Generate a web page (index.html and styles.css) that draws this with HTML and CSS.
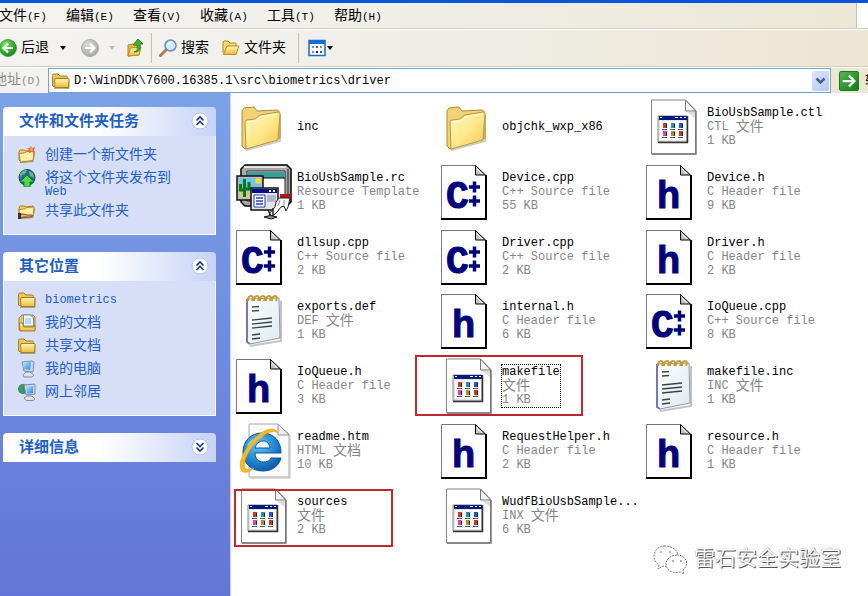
FILE: index.html
```html
<!DOCTYPE html>
<html lang="zh-CN">
<head>
<meta charset="utf-8">
<title>driver</title>
<link rel="stylesheet" href="styles.css">
</head>
<body>
<svg class="defs" aria-hidden="true">
  <defs>
    <linearGradient id="g-folder" x1="0" y1="0" x2="1" y2="1"><stop offset="0" stop-color="#fff9c4"/><stop offset=".5" stop-color="#ffe88c"/><stop offset="1" stop-color="#f5c64e"/></linearGradient>
    <linearGradient id="g-small" x1="0" y1="0" x2="0" y2="1"><stop offset="0" stop-color="#fff6b8"/><stop offset="1" stop-color="#f0bc35"/></linearGradient>
    <radialGradient id="g-green" cx=".35" cy=".3" r=".8"><stop offset="0" stop-color="#8be06c"/><stop offset=".6" stop-color="#2fa832"/><stop offset="1" stop-color="#168018"/></radialGradient>
    <radialGradient id="g-grey" cx=".35" cy=".3" r=".8"><stop offset="0" stop-color="#dcdcdc"/><stop offset="1" stop-color="#a3a3a3"/></radialGradient>
    <radialGradient id="g-ie" cx=".4" cy=".3" r=".8"><stop offset="0" stop-color="#62c8f5"/><stop offset=".6" stop-color="#1b82cf"/><stop offset="1" stop-color="#0b4f9c"/></radialGradient>
    <linearGradient id="g-screen" x1="0" y1="0" x2="1" y2="1"><stop offset="0" stop-color="#b9ecff"/><stop offset="1" stop-color="#1f86e0"/></linearGradient>
    <linearGradient id="g-pad" x1="0" y1="0" x2="1" y2="1"><stop offset="0" stop-color="#ffffff"/><stop offset="1" stop-color="#dcebf0"/></linearGradient>

    <symbol id="i-folder" viewBox="0 0 56 56">
      <path d="M10 51l34-9V16" fill="none" stroke="#999" stroke-width="2" opacity=".5"/>
      <path d="M6 12l2-3 10-1 3 4 20-1q3 1 3 4v24L9 50 6 47z" fill="#f2d272" stroke="#a78a3d"/>
      <path d="M9 23q0-2 2-2l8-1 5-4 18-3q2 0 2 2l-2 26L10 50z" fill="url(#g-folder)" stroke="#b7963f"/>
      <path d="M10.500 23l9-1 5-4 17-3" fill="none" stroke="#fffbe0"/>
    </symbol>
    <symbol id="i-page" viewBox="0 0 56 56">
      <path d="M.5 1.500h34l10 10v43H.5z" fill="#fff" stroke="#777"/>
      <path d="M45 11v44M0 55h46" stroke="#000" stroke-width="2"/>
      <path d="M34.500 1.500v9.500h10z" fill="#c4c4c4" stroke="#000"/><path d="M36 5l5 5" stroke="#fff"/>
    </symbol>
    <symbol id="i-h" viewBox="0 0 56 56">
      <use href="#i-page"/>
      <text x="11" y="44" class="glyph">h</text>
    </symbol>
    <symbol id="i-cpp" viewBox="0 0 56 56">
      <use href="#i-page"/>
      <text x="5" y="44" class="glyph glyph-c">C</text>
      <path d="M28 23h11M33.500 17.500v11M28 37h11M33.500 31.500v11" stroke="#00007e" stroke-width="3.500"/>
    </symbol>
    <symbol id="i-generic" viewBox="0 0 56 56">
      <path d="M5.500 1h34l10 10v44h-44z" fill="#fff" stroke="#858585"/>
      <path d="M50 12v43H6" fill="none" stroke="#777" stroke-width="1.500"/>
      <path d="M39.500 1v11h10z" fill="#f3f3f3" stroke="#777"/><path d="M41 13l8 6v-6z" fill="#ddd"/>
      <path d="M12 17h29v26H12z" fill="#e8e6dc" stroke="#888"/>
      <path d="M41.500 17v26.500H12" fill="none" stroke="#333" stroke-width="1.500"/>
      <path d="M13 17h28v4H13z" fill="#001a84"/><path d="M14 18.500h2M29 18.500h3M34 18.500h2M38 18.500h2" stroke="#fff"/>
      <path d="M14 22h26v19H14z" fill="#fff"/>
      <path d="M17 24h4v5h-4z" fill="#d8372a"/><path d="M25 24h4v5h-4z" fill="#1d98a0"/><path d="M33 24h4v5h-4z" fill="#2255cf"/>
      <path d="M17 32h4v5h-4z" fill="#e43abf"/><path d="M25 32h4v5h-4z" fill="#9b9a20"/><path d="M33 32h4v5h-4z" fill="#d33131"/>
      <path d="M16 30.500h5M24 30.500h5M32 30.500h5M16 38.500h5M24 38.500h5M32 38.500h5" stroke="#555"/>
      <path d="M20.500 25v4M28.500 25v4M36.500 25v4M20.500 33v4M28.500 33v4M36.500 33v4" stroke="#222"/>
    </symbol>
    <symbol id="i-notepad" viewBox="0 0 56 56">
      <path d="M14 53l31-5V8" fill="none" stroke="#aaa" stroke-width="2" opacity=".7"/>
      <path d="M11 6l32-1 1 40-30 6-3-2z" fill="url(#g-pad)" stroke="#8c94ad"/>
      <path d="M11 6v43l3 2" fill="none" stroke="#7a73c4" stroke-width="2"/>
      <path d="M12 8q0-5 3-5t1 5M18 8q0-5 3-5t1 5M24 8q0-5 3-5t1 5M30 8q0-5 3-5t1 5M36 8q0-5 3-5t1 5" fill="none" stroke="#c69d34" stroke-width="2"/>
      <path d="M16 14l7-.5M16 18l7-.5M16 27l20-2M16 31l20-2M16 35l20-2M16 42l8-1M16 46l8-1" stroke="#3d4447" stroke-width="1.300"/>
    </symbol>
    <symbol id="i-rc" viewBox="0 0 56 56">
      <path d="M9 1h42l4 4v33l-4 4H9l-4-4V5z" fill="#a9a9a9" stroke="#000" stroke-width="1.500"/>
      <path d="M8 3h42" stroke="#e4e4e4" stroke-width="2"/><path d="M52 5v33" stroke="#666" stroke-width="2"/>
      <path d="M11 7h38v30H11z" fill="#fff" stroke="#222"/><path d="M11 8h38v6H11z" fill="#3c9d9d"/><path d="M12 14h37" stroke="#000"/>
      <path d="M1 12h26v24H1z" fill="#bdbdbd" stroke="#111" stroke-width="1.500"/>
      <path d="M3 14h22v13H3z" fill="#6fc6ed"/><path d="M3 27h22v7H3z" fill="#d3c68b"/><circle cx="22" cy="17" r="3" fill="#f7d733"/>
      <path d="M8.500 33V15M4.500 20v6h4M13 18v7H8.500" fill="none" stroke="#077a16" stroke-width="3"/>
      <path d="M15 24h27v22H15z" fill="#e6e6f2" stroke="#111" stroke-width="1.500"/><path d="M16 25h25v4H16z" fill="#00108c"/><path d="M33 27h2M37 27h2" stroke="#fff" stroke-width="2"/>
      <path d="M18 31h11v12H18z" fill="#fff" stroke="#223d9c"/><path d="M20 34h7M20 37h7M20 40h7" stroke="#2b44b9" stroke-width="1.500"/>
      <path d="M31 31h9v7h-9z" fill="#b5b5c9"/>
      <path d="M44 30h11v4H44z" fill="#b91010"/>
      <path d="M43 34h11l-2 9-2 4-2-5-3 1-4 5-5 5-3-3 6-7 1-5z" fill="#fff" stroke="#222"/>
      <path d="M44 36l-2 6M48 36v5" stroke="#888"/>
      <path d="M28 53q6-3 13 0l-6 2z" fill="#999" stroke="#111"/><path d="M32 46l3 6M37 44v8" stroke="#222" stroke-width="1.500"/>
    </symbol>
    <symbol id="i-ie" viewBox="0 0 56 56">
      <path d="M13 1h29l11 10v43H13z" fill="#fafafa" stroke="#aaa"/><path d="M42 1v11h11z" fill="#eee" stroke="#999"/><path d="M54 12v43H14" fill="none" stroke="#bbb"/>
      <path fill-rule="evenodd" d="M26 10c12 0 19 8 19 20H19c0 6 4 9 8 9 4 0 7-1 8-4h10c-2 8-9 13-18 13C15 48 7 40 7 29s8-19 19-19zm-7 15h15c-1-5-3-7-7-7s-7 3-8 7z" fill="url(#g-ie)" stroke="#0d559c"/>
      <path d="M12 23c3-5 8-9 14-9" fill="none" stroke="#9be1ff" stroke-width="2"/>
      <path d="M42 10c-3-8-17-3-26 8C6 30 1 42 6 48c3 3 8 1 12-3-5 2-8 2-9-1-2-5 3-16 11-25C28 11 37 6 42 10z" fill="#f5b921" stroke="#d99a1b" stroke-width=".5"/>
    </symbol>

    <symbol id="s-folder" viewBox="0 0 18 18">
      <path d="M2 16.500h15V7" fill="none" stroke="#807852" opacity=".6"/>
      <path d="M.5 3.500q0-1.500 1.500-1.500h4l2 2h6q1.500 0 1.500 1.500V15h-13L.5 14z" fill="#eec55a" stroke="#a3801f"/>
      <path d="M2.500 8Q2.500 6.500 4 6.500h12q1 0 1 1L16.500 15.500H3z" fill="url(#g-small)" stroke="#a3801f"/>
    </symbol>
    <symbol id="s-open" viewBox="0 0 18 18">
      <path d="M1 14V3l1-1h4l2 2h6v3" fill="#f8d86c" stroke="#b68a20"/>
      <path d="M1.500 15.500L5 7h12l-3 8.500z" fill="url(#g-small)" stroke="#b68a20"/>
    </symbol>
    <symbol id="s-task" viewBox="0 0 18 18">
      <path d="M2 16.500l13-1 1.500-9" fill="none" stroke="#6b6240" opacity=".7"/>
      <path d="M1 6l1-2h4l2 1 7-1v10L3 16 1 14z" fill="#f3cf6e" stroke="#a3801f"/>
      <path d="M1 7.500l5-.5 3-1.500 7-.5-1 9.500L2.500 16z" fill="#ffefac" stroke="#b68a20"/>
    </symbol>
    <symbol id="s-new" viewBox="0 0 18 18">
      <use href="#s-task"/><path d="M13 0l1 2 3-1-1 3 1 3-3-1-3 1 0-3-2-2 3 0z" fill="#f06522"/><circle cx="13.500" cy="3.500" r="1.500" fill="#ffb04b"/>
    </symbol>
    <symbol id="s-share" viewBox="0 0 18 18">
      <use href="#s-task"/><path d="M2 12h4l3 1h5q1 1-1 2H6l-4 1z" fill="#f1b06e" stroke="#8a4a1c"/><path d="M0 11h3v6H0z" fill="#333"/>
    </symbol>
    <symbol id="s-web" viewBox="0 0 18 18">
      <circle cx="9" cy="8.500" r="8" fill="#2265ac" stroke="#174675"/><path d="M2 5q4-5 7-4l-2 4-3 1-1 4zM11 2l4 2 1 5-4-2z" fill="#69bb61"/>
      <path d="M9 6l7 7h-4v5H6v-5H2z" fill="#4fdc3d" stroke="#12831b"/>
    </symbol>
    <symbol id="s-docs" viewBox="0 0 18 18">
      <path d="M1 16V4l3-3h11l2 2v13z" fill="#eec55a" stroke="#a3801f"/>
      <path d="M5.500 1h7l3 3v8h-10z" fill="#e9f7ff" stroke="#6b93b5"/><path d="M7 5h6M7 7h6M7 9h6" stroke="#8abce0"/>
      <path d="M1.500 9h3l1 4h10l1.500-2v6h-15z" fill="url(#g-small)" stroke="#a3801f"/>
    </symbol>
    <symbol id="s-pc" viewBox="0 0 18 18">
      <path d="M4 2l10-1 2 1-1 10-9-1z" fill="#ccd5e6" stroke="#7f8ba5"/><path d="M5 3l8-1-1 8-6-1z" fill="url(#g-screen)"/>
      <path d="M8 12h4l4 3-2 2H6l-1-2z" fill="#dfe2e6" stroke="#858b97"/>
    </symbol>
    <symbol id="s-net" viewBox="0 0 18 18">
      <circle cx="5" cy="6" r="5" fill="#2272bd"/><path d="M1 4q3-4 6-3L5 5l1 4-2 2-3-3z" fill="#43a33b"/>
      <path d="M6 2l11-1v10l-9 1z" fill="#ccd5e6" stroke="#7f8ba5"/><path d="M8 4l7-1v7l-6 1z" fill="url(#g-screen)"/><path d="M9 13h5l3 3-2 1.500H8L6 15z" fill="#dfe2e6" stroke="#858b97"/>
    </symbol>
    <symbol id="s-back" viewBox="0 0 18 18">
      <circle cx="9" cy="9" r="8.500" fill="url(#g-green)" stroke="#2d8b2d" stroke-width=".7"/><path d="M14 9H5M9 4.500L4.500 9 9 13.500" fill="none" stroke="#fff" stroke-width="2.200"/>
    </symbol>
    <symbol id="s-forward" viewBox="0 0 18 18">
      <circle cx="9" cy="9" r="8.500" fill="url(#g-grey)" stroke="#999" stroke-width=".7"/><path d="M4 9h9M9 4.500L13.500 9 9 13.500" fill="none" stroke="#fff" stroke-width="2.200"/>
    </symbol>
    <symbol id="s-up" viewBox="0 0 18 18">
      <path d="M2 17V6l5-1 1 1h5v10z" fill="#e8bf40" stroke="#a8862a"/><path d="M2 17L4.500 9 15 8l-2 8z" fill="url(#g-small)" stroke="#b68a20"/>
      <path d="M8 13c3-1 4-3 3-7H7l5-6 5 5h-3c1 6-1 8-6 8z" fill="#37b52d" stroke="#167b18" stroke-width=".8"/>
    </symbol>
    <symbol id="s-search" viewBox="0 0 18 18">
      <path d="M1.500 16.500l6-6" stroke="#bd7258" stroke-width="3" stroke-linecap="round"/>
      <circle cx="11.500" cy="6.500" r="5.500" fill="#c9ecff" stroke="#6688c9" stroke-width="1.500"/><path d="M8.500 6q1-3 4-2.500" fill="none" stroke="#fff" stroke-width="1.500"/>
    </symbol>
    <symbol id="s-views" viewBox="0 0 18 18">
      <path d="M1 1.500h16v15H1z" fill="#fff" stroke="#1b66cf" stroke-width="1.500"/><path d="M1 1h16v4H1z" fill="#1b6be0"/>
      <path d="M4 7h2v2H4zM12 7h2v2h-2z" fill="#6da07a"/><path d="M8 7h2v2H8zM12 12h2v2h-2z" fill="#3160ba"/><path d="M4 12h2v2H4z" fill="#b07098"/><path d="M8 12h2v2H8z" fill="#222"/>
    </symbol>
    <symbol id="s-up2" viewBox="0 0 18 18">
      <circle cx="9" cy="9" r="8" fill="#fff" stroke="#b7c3e4"/><path d="M5.500 8.500L9 5l3.500 3.500M5.500 13L9 9.500l3.500 3.500" fill="none" stroke="#17378c" stroke-width="1.700"/>
    </symbol>
    <symbol id="s-down2" viewBox="0 0 18 18">
      <circle cx="9" cy="9" r="8" fill="#fff" stroke="#b7c3e4"/><path d="M5.500 5L9 8.500 12.500 5M5.500 9.500L9 13l3.500-3.500" fill="none" stroke="#17378c" stroke-width="1.700"/>
    </symbol>
  </defs>
</svg>

<div class="window">
  <div class="titlebar"></div>
  <header class="menubar">
    <nav class="menus">
      <button>文件<span class="key">(F)</span></button>
      <button>编辑<span class="key">(E)</span></button>
      <button>查看<span class="key">(V)</span></button>
      <button>收藏<span class="key">(A)</span></button>
      <button>工具<span class="key">(T)</span></button>
      <button>帮助<span class="key">(H)</span></button>
    </nav>
    <div class="brand"></div>
  </header>

  <div class="toolbar">
    <button class="tool tool-back"><svg class="ico"><use href="#s-back"/></svg>后退</button>
    <button class="drop" aria-label="后退历史"></button>
    <button class="tool tool-forward" aria-label="前进"><svg class="ico"><use href="#s-forward"/></svg></button>
    <button class="drop drop-off" aria-label="前进历史"></button>
    <button class="tool tool-up" aria-label="向上"><svg class="ico"><use href="#s-up"/></svg></button>
    <span class="sep"></span>
    <button class="tool"><svg class="ico"><use href="#s-search"/></svg>搜索</button>
    <button class="tool tool-folders"><svg class="ico"><use href="#s-open"/></svg>文件夹</button>
    <span class="sep"></span>
    <button class="tool tool-views" aria-label="查看方式"><svg class="ico"><use href="#s-views"/></svg><span class="caret"></span></button>
  </div>

  <form class="address">
    <label for="path">地址<span class="key">(D)</span></label>
    <div class="combo">
      <svg class="ico"><use href="#s-folder"/></svg>
      <input id="path" type="text" value="D:\WinDDK\7600.16385.1\src\biometrics\driver" spellcheck="false">
      <button type="button" class="combo-btn" aria-label="展开"><svg viewBox="0 0 17 20"><path d="M4.500 7.500l4 4 4-4" fill="none" stroke="#4d6185" stroke-width="2.500"/></svg></button>
    </div>
    <button type="button" class="go"><svg viewBox="0 0 20 20"><path d="M3 10h12M10 4l6 6-6 6" fill="none" stroke="#fff" stroke-width="2.500"/></svg><span>转到</span></button>
  </form>

  <div class="main">
    <aside class="side">
      <section class="panel">
        <h2>文件和文件夹任务<button aria-label="收起"><svg class="ico"><use href="#s-up2"/></svg></button></h2>
        <ul>
          <li><svg class="ico"><use href="#s-new"/></svg><a href="#">创建一个新文件夹</a></li>
          <li><svg class="ico"><use href="#s-web"/></svg><a href="#">将这个文件夹发布到<span class="web">Web</span></a></li>
          <li><svg class="ico"><use href="#s-share"/></svg><a href="#">共享此文件夹</a></li>
        </ul>
      </section>
      <section class="panel">
        <h2>其它位置<button aria-label="收起"><svg class="ico"><use href="#s-up2"/></svg></button></h2>
        <ul>
          <li><svg class="ico"><use href="#s-folder"/></svg><a href="#" class="latin">biometrics</a></li>
          <li><svg class="ico"><use href="#s-docs"/></svg><a href="#">我的文档</a></li>
          <li><svg class="ico"><use href="#s-folder"/></svg><a href="#">共享文档</a></li>
          <li><svg class="ico"><use href="#s-pc"/></svg><a href="#">我的电脑</a></li>
          <li><svg class="ico"><use href="#s-net"/></svg><a href="#">网上邻居</a></li>
        </ul>
      </section>
      <section class="panel">
        <h2>详细信息<button aria-label="展开"><svg class="ico"><use href="#s-down2"/></svg></button></h2>
      </section>
    </aside>

    <main class="files">
      <a class="file" href="#"><svg><use href="#i-folder"/></svg><span class="info"><b>inc</b></span></a>
      <a class="file" href="#"><svg><use href="#i-folder"/></svg><span class="info"><b>objchk_wxp_x86</b></span></a>
      <a class="file" href="#"><svg><use href="#i-generic"/></svg><span class="info"><b>BioUsbSample.ctl</b><i>CTL <em>文件</em></i><i>1 KB</i></span></a>

      <a class="file" href="#"><svg><use href="#i-rc"/></svg><span class="info"><b>BioUsbSample.rc</b><i>Resource Template</i><i>1 KB</i></span></a>
      <a class="file" href="#"><svg><use href="#i-cpp"/></svg><span class="info"><b>Device.cpp</b><i>C++ Source file</i><i>55 KB</i></span></a>
      <a class="file" href="#"><svg><use href="#i-h"/></svg><span class="info"><b>Device.h</b><i>C Header file</i><i>9 KB</i></span></a>

      <a class="file" href="#"><svg><use href="#i-cpp"/></svg><span class="info"><b>dllsup.cpp</b><i>C++ Source file</i><i>2 KB</i></span></a>
      <a class="file" href="#"><svg><use href="#i-cpp"/></svg><span class="info"><b>Driver.cpp</b><i>C++ Source file</i><i>2 KB</i></span></a>
      <a class="file" href="#"><svg><use href="#i-h"/></svg><span class="info"><b>Driver.h</b><i>C Header file</i><i>2 KB</i></span></a>

      <a class="file" href="#"><svg><use href="#i-notepad"/></svg><span class="info"><b>exports.def</b><i>DEF <em>文件</em></i><i>1 KB</i></span></a>
      <a class="file" href="#"><svg><use href="#i-h"/></svg><span class="info"><b>internal.h</b><i>C Header file</i><i>6 KB</i></span></a>
      <a class="file" href="#"><svg><use href="#i-cpp"/></svg><span class="info"><b>IoQueue.cpp</b><i>C++ Source file</i><i>8 KB</i></span></a>

      <a class="file" href="#"><svg><use href="#i-h"/></svg><span class="info"><b>IoQueue.h</b><i>C Header file</i><i>3 KB</i></span></a>
      <a class="file mark mark-makefile" href="#"><svg><use href="#i-generic"/></svg><span class="info focused"><b>makefile</b><i><em>文件</em></i><i>1 KB</i></span></a>
      <a class="file" href="#"><svg><use href="#i-notepad"/></svg><span class="info"><b>makefile.inc</b><i>INC <em>文件</em></i><i>1 KB</i></span></a>

      <a class="file" href="#"><svg><use href="#i-ie"/></svg><span class="info"><b>readme.htm</b><i>HTML <em>文档</em></i><i>10 KB</i></span></a>
      <a class="file" href="#"><svg><use href="#i-h"/></svg><span class="info"><b>RequestHelper.h</b><i>C Header file</i><i>2 KB</i></span></a>
      <a class="file" href="#"><svg><use href="#i-h"/></svg><span class="info"><b>resource.h</b><i>C Header file</i><i>1 KB</i></span></a>

      <a class="file mark mark-sources" href="#"><svg><use href="#i-generic"/></svg><span class="info"><b>sources</b><i><em>文件</em></i><i>2 KB</i></span></a>
      <a class="file" href="#"><svg><use href="#i-generic"/></svg><span class="info"><b>WudfBioUsbSample...</b><i>INX <em>文件</em></i><i>6 KB</i></span></a>
    </main>
  </div>

  <div class="watermark">
    <svg viewBox="0 0 36 30">
      <g fill="#fff" stroke="#777" stroke-dasharray="2 1">
        <path d="M12 1C5 1 1 6 1 11c0 4 2 7 5 9l-1 4 5-3c9 2 15-3 15-10C25 5 19 1 12 1z"/>
        <path d="M24 10c-6 0-11 4-11 9 0 6 6 10 14 8l4 2-1-4c7-6 3-15-6-15z"/>
      </g>
      <path d="M7 7h2M16 7h2M19 16h2M27 16h2" stroke="#666"/>
    </svg>
    <span>雷石安全实验室</span>
  </div>
</div>
</body>
</html>
```
FILE: styles.css
```css
*, *::after { box-sizing: border-box; }

body {
  margin: 0;
  font-family: "Liberation Mono", "Noto Sans CJK SC", monospace;
  font-size: 14px;
  line-height: 18px;
  color: #000;
}

button {
  margin: 0;
  padding: 0;
  border: 0;
  background: none;
  font: inherit;
  color: inherit;
  white-space: nowrap;
}

a { color: inherit; text-decoration: none; }

.defs { position: absolute; width: 0; height: 0; }
.ico { display: block; flex: none; width: 18px; height: 18px; }
.key { font-size: 11px; }

.glyph {
  font-family: "Liberation Sans", sans-serif;
  font-size: 38px;
  font-weight: bold;
  fill: #00007e;
  stroke: #00007e;
}
.glyph-c { font-family: "Liberation Mono", monospace; }

.window {
  position: relative;
  display: flex;
  flex-direction: column;
  min-height: 100vh;
  overflow: hidden;
  background: #fff;
}

.titlebar { height: 3px; background: #0855dd; }

/* Menu, tool and address bars */
.menubar {
  display: flex;
  height: 26px;
  background: linear-gradient(90deg, #f4f3f0, #efeee6 50%, #ece8d6);
  border-bottom: 1px solid #d0cdbf;
}
.menus { display: flex; flex: 1; margin-left: -1px; padding-top: 2px; }
.menus button { width: 67px; text-align: left; }
.brand { width: 12px; background: #fff; border-left: 1px solid #c5c2b5; }

.toolbar {
  display: flex;
  align-items: center;
  height: 38px;
  background: linear-gradient(90deg, #f4f3f0, #efeee6 50%, #ece6d3);
  border-top: 1px solid #fff;
  border-bottom: 1px solid #cfccbe;
}
.tool { display: flex; align-items: center; gap: 4px; }
.tool-back { margin-left: -1px; }
.drop, .caret {
  width: 0;
  height: 0;
  border: 3px solid transparent;
  border-top: 4px solid #000;
  border-bottom: 0;
}
.drop { margin: 0 15px 0 11px; }
.drop-off { margin: 0 11px 0 10px; border-top-color: #bbb; }
.sep { width: 1px; height: 30px; margin: 0 7px; background: #c3c0b1; }
.tool-folders { margin-left: 13px; }
.tool-folders + .sep { margin: 0 9px 0 12px; }
.tool-views { gap: 1px; }

.address {
  display: flex;
  align-items: center;
  height: 26px;
  margin: 0;
  background: linear-gradient(90deg, #f4f3f0, #efeee6 50%, #ece6d3);
  border-top: 1px solid #fff;
}
.address label { width: 55px; margin-left: -7px; color: #8b8b87; white-space: nowrap; }
.combo {
  display: flex;
  flex: 1;
  align-items: center;
  gap: 4px;
  min-width: 0;
  height: 25px;
  padding-left: 3px;
  background: #fff;
  border: 1px solid #7f9fcb;
}
.combo input {
  flex: 1;
  min-width: 0;
  padding: 0;
  border: 0;
  outline: 0;
  background: none;
  font: inherit;
  font-size: 12px;
}
.combo-btn {
  width: 17px;
  height: 20px;
  margin-right: 1px;
  border-radius: 2px;
  background: linear-gradient(135deg, #dbe5fe, #b4c8f6);
}
.combo-btn svg, .go svg { display: block; width: 100%; height: 100%; }
.go { display: flex; align-items: center; gap: 6px; width: 29px; margin-left: 8px; overflow: hidden; }
.go svg {
  flex: none;
  width: 20px;
  height: 20px;
  border: 1px solid #1d7a22;
  border-radius: 2px;
  background: linear-gradient(135deg, #58b558, #0d7d13);
}

.main { display: flex; flex: 1; }

/* Task pane */
.side {
  display: flex;
  flex: none;
  flex-direction: column;
  gap: 17px;
  width: 231px;
  padding: 14px 14px 0 3px;
  background: linear-gradient(#7ba2e7, #6375d6);
  border-right: 1px solid #c6d5fb;
}
.panel h2 {
  display: flex;
  align-items: center;
  justify-content: space-between;
  height: 29px;
  margin: 0;
  padding: 3px 7px 0 16px;
  border-radius: 4px 4px 0 0;
  background: linear-gradient(90deg, #fff 45%, #c6d3f7);
  font-size: 15px;
  font-weight: bold;
  color: #215dc6;
}
.panel h2 button { margin-bottom: 4px; }
.panel ul {
  display: flex;
  flex-direction: column;
  gap: 5px;
  margin: 0;
  padding: 10px 14px 14px;
  list-style: none;
  background: #d6dff7;
  border: 1px solid #fff;
  border-top: 0;
}
.panel li { display: flex; align-items: flex-start; gap: 9px; color: #215dc6; }
.panel .latin, .web { font-size: 12px; }
.web { display: block; line-height: 10px; }

/* File tiles */
.files {
  display: grid;
  flex: 1;
  grid-template-columns: repeat(auto-fill, 205px);
  grid-auto-rows: 1fr;
  min-width: 0;
  padding: 2px 0 48px 5px;
}
.file { position: relative; display: flex; align-items: center; gap: 5px; white-space: nowrap; }
.file > svg { flex: none; width: 56px; height: 56px; }
.info { display: flex; flex-direction: column; font-size: 12px; line-height: 14px; }
.info b { font-weight: normal; }
.info i { font-style: normal; color: #858585; }
.info em { font-size: 14px; font-style: normal; line-height: 14px; vertical-align: top; }
.focused { outline: 1px dotted #000; }

/* Red callout frames over single tiles */
.mark::after { content: ""; position: absolute; border: 2px solid #c1272d; }
.mark-makefile::after { top: 1px; left: -26px; width: 168px; height: 61px; }
.mark-sources::after { top: 6px; left: -2px; width: 159px; height: 58px; }

.watermark {
  position: absolute;
  right: 27px;
  bottom: 20px;
  display: flex;
  align-items: center;
  gap: 5px;
  font-size: 21px;
  line-height: 32px;
  color: #fff;
  text-shadow: 1px 1px 0 #555, 0 0 1px #777;
}
.watermark svg { width: 36px; height: 30px; }
```
